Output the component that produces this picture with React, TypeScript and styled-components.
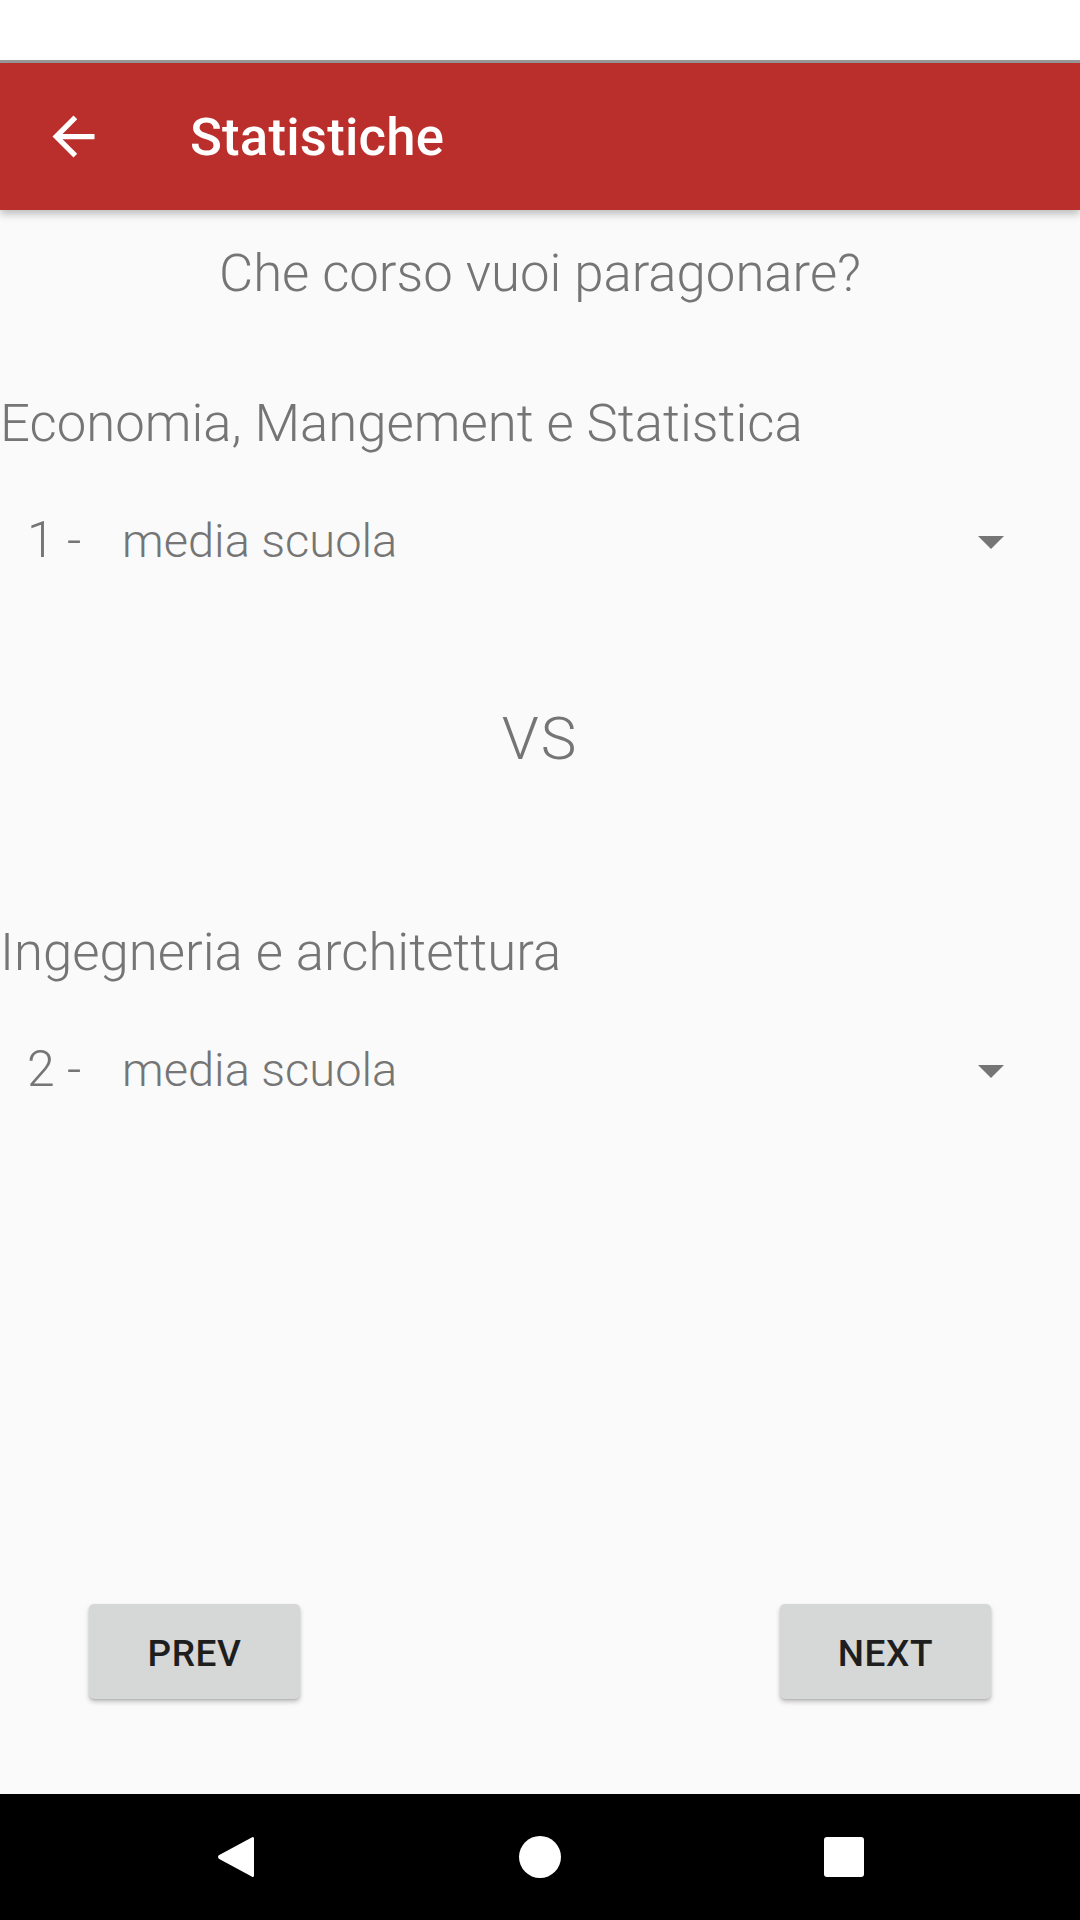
import React from "react";
import styled, { createGlobalStyle } from "styled-components";

const Global = createGlobalStyle`
  html, body { margin: 0; padding: 0; background: #fafafa; }
  body { font-family: Roboto, "Noto Sans", "Liberation Sans", sans-serif; }
  * { box-sizing: border-box; }
`;

const Screen = styled.div`
  width: 1080px;
  height: 1920px;
  display: flex;
  flex-direction: column;
  background: #fafafa;
  overflow: hidden;
`;

const StatusBar = styled.div`
  height: 63px;
  background: #ffffff;
  border-bottom: 3px solid #9a9a9a;
  flex-shrink: 0;
`;

const Toolbar = styled.header`
  height: 147px;
  flex-shrink: 0;
  background: #ba2e2b;
  display: flex;
  align-items: center;
  padding-left: 42px;
  box-shadow: 0 4px 8px rgba(0, 0, 0, 0.25);
  position: relative;
  z-index: 1;
`;

const BackIcon = styled.svg`
  width: 63px;
  height: 63px;
  fill: #ffffff;
  flex-shrink: 0;
`;

const Title = styled.h1`
  margin: 0 0 0 85px;
  color: #ffffff;
  font-size: 52.7px;
  font-weight: 500;
  line-height: 60px;
  letter-spacing: 0.2px;
`;

const Content = styled.main`
  flex: 1;
  display: flex;
  flex-direction: column;
`;

const Question = styled.div`
  margin-top: 30px;
  text-align: center;
  font-size: 52.7px;
  line-height: 66px;
  font-weight: 300;
  color: #757575;
`;

const Course = styled.div<{ $gap: number }>`
  margin-top: ${(p) => p.$gap}px;
  font-size: 52.7px;
  line-height: 66px;
  font-weight: 300;
  color: #757575;
  white-space: nowrap;
`;

const SpinnerRow = styled.div`
  margin-top: 51px;
  height: 66px;
  display: flex;
  align-items: baseline;
  padding-left: 27px;
  padding-right: 76px;
  color: #757575;
  font-weight: 300;
  line-height: 66px;
`;

const Index = styled.span`
  font-size: 50px;
  width: 95px;
  flex-shrink: 0;
`;

const SpinnerText = styled.span`
  font-size: 47px;
  flex: 1;
`;

const Caret = styled.svg`
  width: 26px;
  height: 13px;
  fill: #757575;
  align-self: center;
  margin-top: 4px;
`;

const Versus = styled.div`
  margin-top: 131px;
  text-align: center;
  font-size: 60px;
  line-height: 70px;
  font-weight: 300;
  letter-spacing: 2px;
  color: #757575;
`;

const ButtonRow = styled.div`
  margin-top: auto;
  margin-bottom: 95px;
  display: flex;
  justify-content: space-between;
  padding: 0 89px;
`;

const FlatButton = styled.button`
  width: 211px;
  height: 95px;
  border: none;
  border-radius: 5px;
  background: #d6d7d7;
  color: #1e1e1e;
  font-family: Roboto, "Noto Sans", sans-serif;
  font-size: 37px;
  font-weight: 500;
  letter-spacing: 0.6px;
  box-shadow: 0 3px 5px rgba(0, 0, 0, 0.22), 0 1px 2px rgba(0, 0, 0, 0.12);
  padding: 4px 0 0;
`;

const NavBar = styled.nav`
  height: 126px;
  flex-shrink: 0;
  background: #000000;
  display: grid;
  grid-template-columns: repeat(3, 304px);
  justify-items: center;
  align-items: center;
  padding-left: 84px;
`;

const NavIcon = styled.svg`
  width: 44px;
  height: 44px;
  fill: #ffffff;
  display: block;
`;

function Spinner({ index }: { index: number }) {
  return (
    <SpinnerRow>
      <Index>{index} -</Index>
      <SpinnerText>media scuola</SpinnerText>
      <Caret viewBox="0 0 26 13">
        <path d="M0 0h26L13 13z" />
      </Caret>
    </SpinnerRow>
  );
}

export default function App() {
  return (
    <>
      <Global />
      <Screen>
        <StatusBar />
        <Toolbar>
          <BackIcon viewBox="0 0 24 24">
            <path d="M20 11H7.83l5.59-5.59L12 4l-8 8 8 8 1.41-1.41L7.83 13H20v-2z" />
          </BackIcon>
          <Title>Statistiche</Title>
        </Toolbar>
        <Content>
          <Question>Che corso vuoi paragonare?</Question>
          <Course $gap={84}>Economia, Mangement e Statistica</Course>
          <Spinner index={1} />
          <Versus>VS</Versus>
          <Course $gap={145}>Ingegneria e architettura</Course>
          <Spinner index={2} />
          <ButtonRow>
            <FlatButton>PREV</FlatButton>
            <FlatButton>NEXT</FlatButton>
          </ButtonRow>
        </Content>
        <NavBar>
          <NavIcon viewBox="0 0 44 44">
            <path d="M40 3.5c0-1.5-1.4-2-2.3-1L4.8 20.3c-1 1-1 2.4 0 3.4L37.7 41.5c.9 1 2.3.5 2.3-1z" />
          </NavIcon>
          <NavIcon viewBox="0 0 44 44">
            <circle cx="22" cy="22" r="21" />
          </NavIcon>
          <NavIcon viewBox="0 0 44 44">
            <rect x="2" y="2" width="40" height="40" rx="3" />
          </NavIcon>
        </NavBar>
      </Screen>
    </>
  );
}
